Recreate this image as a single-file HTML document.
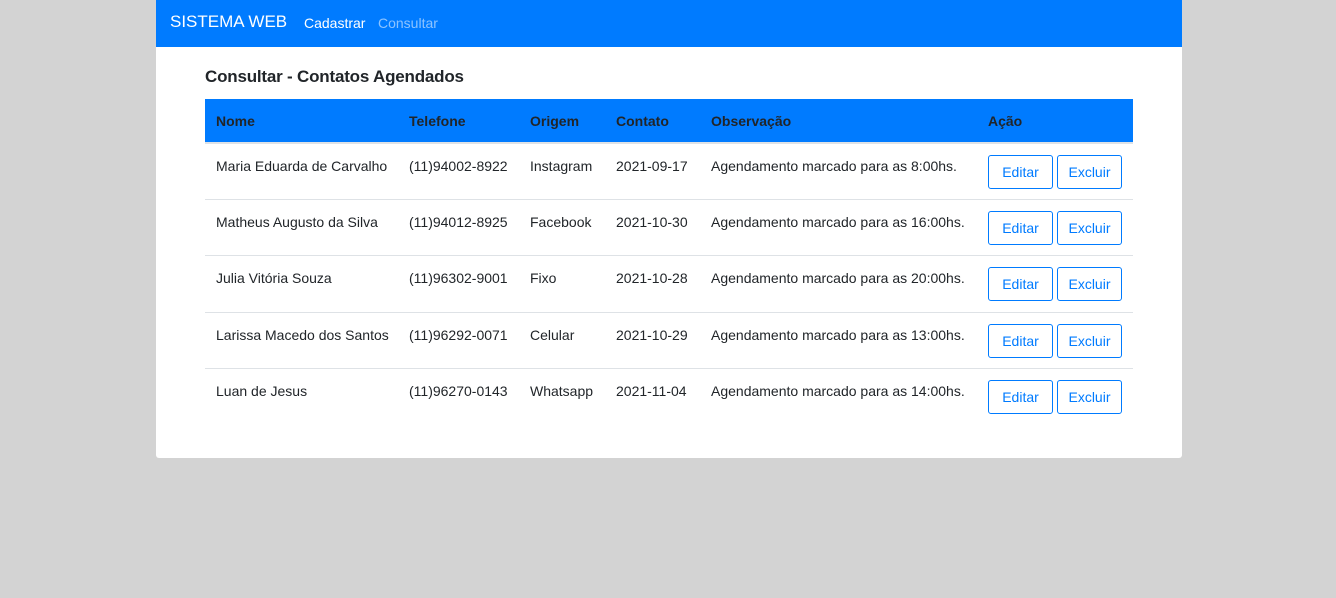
<!DOCTYPE html>
<html><head><meta charset="utf-8"><style>
*{box-sizing:border-box;margin:0;padding:0}
body{width:1336px;height:598px;background:#d3d3d3;font-family:"Liberation Sans",sans-serif;color:#212529;font-size:14px;overflow:hidden}
.wrap{position:absolute;left:156px;top:0;width:1026px;height:458px;background:#fff;border-radius:0 0 3px 3px}
.nav{height:47px;background:#007bff;position:relative}
.brand{position:absolute;left:14px;top:12px;color:#fff;font-size:17px}
.l1{position:absolute;left:148px;top:15px;color:#fff;font-size:14px}
.l2{position:absolute;left:222px;top:15px;color:rgba(255,255,255,.55);font-size:14px}
h2{position:absolute;left:49px;top:67px;font-size:17px;font-weight:bold;color:#212529;letter-spacing:-0.2px}
table{position:absolute;left:49px;top:99px;width:928px;border-collapse:collapse;table-layout:fixed}
th{background:#007bff;height:44px;text-align:left;font-weight:bold;padding-left:11px;border-bottom:2px solid #dee2e6}
td{height:56.4px;padding-left:11px;border-top:1px solid #dee2e6;vertical-align:top;padding-top:14px;white-space:nowrap}
tr:nth-child(2) td{border-top:none}
.b{display:inline-block;width:65px;height:34px;border:1px solid #007bff;border-radius:3px;color:#007bff;text-align:center;line-height:32px;margin-top:-3px;margin-right:4px}
</style></head><body>
<div class="wrap">
<div class="nav"><span class="brand">SISTEMA WEB</span><span class="l1">Cadastrar</span><span class="l2">Consultar</span></div>
<h2>Consultar - Contatos Agendados</h2>
<table>
<colgroup><col style="width:193px"><col style="width:121px"><col style="width:86px"><col style="width:95px"><col style="width:277px"><col style="width:156px"></colgroup>
<tr><th>Nome</th><th>Telefone</th><th>Origem</th><th>Contato</th><th>Observação</th><th>Ação</th></tr>
<tr><td>Maria Eduarda de Carvalho</td><td>(11)94002-8922</td><td>Instagram</td><td>2021-09-17</td><td>Agendamento marcado para as 8:00hs.</td><td><span class="b">Editar</span><span class="b">Excluir</span></td></tr>
<tr><td>Matheus Augusto da Silva</td><td>(11)94012-8925</td><td>Facebook</td><td>2021-10-30</td><td>Agendamento marcado para as 16:00hs.</td><td><span class="b">Editar</span><span class="b">Excluir</span></td></tr>
<tr><td>Julia Vitória Souza</td><td>(11)96302-9001</td><td>Fixo</td><td>2021-10-28</td><td>Agendamento marcado para as 20:00hs.</td><td><span class="b">Editar</span><span class="b">Excluir</span></td></tr>
<tr><td>Larissa Macedo dos Santos</td><td>(11)96292-0071</td><td>Celular</td><td>2021-10-29</td><td>Agendamento marcado para as 13:00hs.</td><td><span class="b">Editar</span><span class="b">Excluir</span></td></tr>
<tr><td>Luan de Jesus</td><td>(11)96270-0143</td><td>Whatsapp</td><td>2021-11-04</td><td>Agendamento marcado para as 14:00hs.</td><td><span class="b">Editar</span><span class="b">Excluir</span></td></tr>
</table>
</div>
</body></html>
